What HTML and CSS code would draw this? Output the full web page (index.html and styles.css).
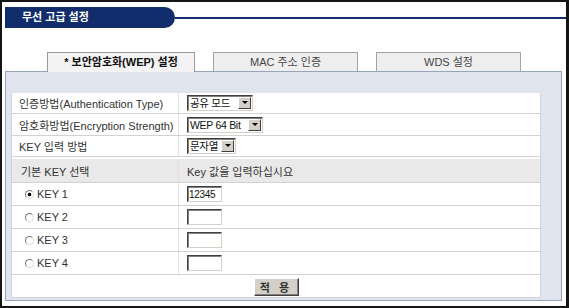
FILE: index.html
```html
<!DOCTYPE html>
<html>
  <head>
    <meta charset="utf-8" />
    <title>무선 고급 설정</title>
    <link rel="stylesheet" href="styles.css">
  </head>
  <body>
    <div class="frame">
      <div class="title-bar">
        <h1 class="title">무선 고급 설정</h1>
        <span class="title-line"></span>
      </div>

      <ul class="tabs">
        <li class="tab active">* 보안암호화(WEP) 설정</li>
        <li class="tab">MAC 주소 인증</li>
        <li class="tab">WDS 설정</li>
      </ul>

      <div class="panel">
        <div class="form-box">
          <div class="row">
            <div class="label">인증방법(Authentication Type)</div>
            <div class="field">
              <span class="combo w-auth"><span class="combo-text">공유 모드</span><span class="combo-btn"></span></span>
            </div>
          </div>
          <div class="row row-tall">
            <div class="label">암호화방법(Encryption Strength)</div>
            <div class="field">
              <span class="combo w-enc"><span class="combo-text">WEP 64 Bit</span><span class="combo-btn"></span></span>
            </div>
          </div>
          <div class="row">
            <div class="label">KEY 입력 방법</div>
            <div class="field">
              <span class="combo w-input"><span class="combo-text">문자열</span><span class="combo-btn"></span></span>
            </div>
          </div>

          <div class="row row-head">
            <div class="label">기본 KEY 선택</div>
            <div class="field">Key 값을 입력하십시요</div>
          </div>
          <div class="row row-key">
            <label class="label"><input type="radio" name="key" checked /> KEY 1</label>
            <div class="field"><input class="key-input" type="text" value="12345" /></div>
          </div>
          <div class="row row-key">
            <label class="label"><input type="radio" name="key" /> KEY 2</label>
            <div class="field"><input class="key-input" type="text" /></div>
          </div>
          <div class="row row-key">
            <label class="label"><input type="radio" name="key" /> KEY 3</label>
            <div class="field"><input class="key-input" type="text" /></div>
          </div>
          <div class="row row-key">
            <label class="label"><input type="radio" name="key" /> KEY 4</label>
            <div class="field"><input class="key-input" type="text" /></div>
          </div>

          <div class="actions">
            <button class="apply-btn">적 용</button>
          </div>
        </div>
      </div>
    </div>
  </body>
</html>
```

FILE: styles.css
```css
body {
  margin: 0;
  font-family: "Liberation Sans", "Noto Sans CJK KR", Arial, sans-serif;
  font-size: 11px;
  color: #333;
  background: #fff;
}
.frame {
  width: 569px;
  height: 308px;
  box-sizing: border-box;
  border: 2px solid #151515;
  border-right-width: 3px;
  overflow: hidden;
}

/* title */
.title-bar {
  display: flex;
  align-items: center;
  margin: 5px 0 0 3px;
}
.title {
  margin: 0;
  width: 170px;
  height: 21px;
  box-sizing: border-box;
  padding-left: 17px;
  line-height: 21px;
  font-size: 11px;
  font-weight: bold;
  color: #fff;
  background-color: #112d6c;
  border-radius: 0 11px 11px 0;
}
.title-line {
  flex: 1;
  height: 2px;
  background-color: #112d6c;
}

/* tabs */
.tabs {
  display: flex;
  gap: 18px;
  list-style: none;
  margin: 24px 0 0;
  padding: 0 0 0 45px;
  height: 19px;
}
.tab {
  width: 145px;
  height: 19px;
  box-sizing: border-box;
  border: 1px solid #a3a3a3;
  border-bottom: none;
  background-color: #efefef;
  color: #444;
  text-align: center;
  line-height: 18px;
}
.tab.active {
  width: 148px;
  height: 20px;
  position: relative;
  z-index: 1;
  background-color: #f3f3f3;
  border-color: #9a9a9a;
  color: #111;
  font-weight: bold;
}

/* panel */
.panel {
  margin: 0 4px 0 3px;
  height: 230px;
  box-sizing: border-box;
  padding: 21px 0 0 5px;
  background-color: #dfe4ee;
  border: 1px solid #98a4bb;
}
.form-box {
  width: 528px;
  background-color: #fff;
  border: 1px solid #cfd3da;
  border-top: none;
}
.row {
  display: grid;
  grid-template-columns: 167px 1fr;
  height: 21px;
  box-sizing: border-box;
  border-bottom: 1px solid #d2d2d2;
}
.row-tall {
  height: 22px;
}
.label {
  display: flex;
  align-items: center;
  padding-left: 7px;
  border-right: 1px solid #e2e2e2;
}
.field {
  display: flex;
  align-items: center;
  padding-left: 8px;
}
.row-head {
  height: 26px;
  background-color: #e9e9e9;
  border-top: 2px solid #fff;
}
.row-head .label {
  padding-left: 9px;
}
.row-key {
  height: 23px;
}
.row-key .label {
  padding-left: 13px;
  gap: 3px;
}

/* old windows style controls */
.combo {
  display: inline-flex;
  align-items: center;
  height: 16px;
  box-sizing: border-box;
  border: 1px solid;
  border-color: #404040 #d4d0c8 #d4d0c8 #404040;
  box-shadow: inset 1px 1px 0 #808080;
  background: #fff;
  color: #111;
  white-space: nowrap;
  overflow: hidden;
}
.combo-text {
  flex: 1;
  padding-left: 2px;
  line-height: 14px;
  font-size: 10.5px;
  letter-spacing: -0.3px;
  overflow: hidden;
}
.combo-btn {
  position: relative;
  flex-shrink: 0;
  width: 13px;
  height: 12px;
  margin-right: 1px;
  box-sizing: border-box;
  background-color: #d4d0c8;
  border: 1px solid;
  border-color: #fff #404040 #404040 #fff;
}
.combo-btn::after {
  content: "";
  position: absolute;
  left: 3px;
  top: 3px;
  border: 3px solid transparent;
  border-top: 3px solid #000;
  border-bottom: none;
}
.w-auth {
  width: 66px;
}
.w-enc {
  width: 76px;
}
.w-input {
  width: 49px;
}
.key-input {
  width: 35px;
  height: 16px;
  box-sizing: border-box;
  margin: 0;
  padding: 0 1px;
  font-family: inherit;
  font-size: 10px;
  letter-spacing: -0.3px;
  color: #111;
  border: 1px solid;
  border-color: #404040 #d4d0c8 #d4d0c8 #404040;
  box-shadow: inset 1px 1px 0 #808080;
}
input[type="radio"] {
  appearance: none;
  width: 9px;
  height: 9px;
  margin: 0;
  border-radius: 50%;
  border: 1px solid;
  border-color: #7a7a7a #dcdcdc #dcdcdc #7a7a7a;
  background: #fff;
}
input[type="radio"]:checked {
  background: radial-gradient(circle, #111 0 1.6px, #fff 2.2px);
}

.actions {
  display: flex;
  justify-content: center;
  align-items: center;
  height: 22px;
}
.apply-btn {
  width: 45px;
  height: 18px;
  margin-top: 2px;
  padding: 0;
  font-family: inherit;
  font-size: 11px;
  font-weight: bold;
  color: #333;
  letter-spacing: 3px;
  background-color: #d4d0c8;
  border: 1px solid;
  border-color: #fff #404040 #404040 #fff;
  box-shadow: inset -1px -1px 0 #808080;
}
```
